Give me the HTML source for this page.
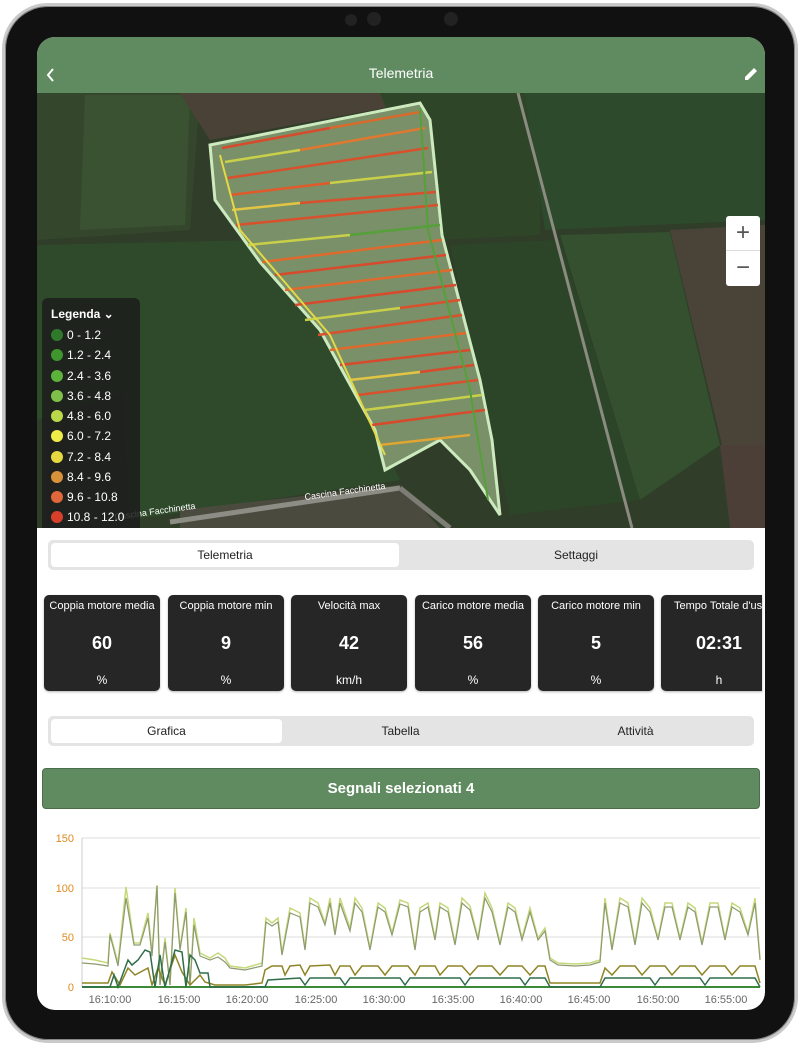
<!DOCTYPE html>
<html><head><meta charset="utf-8"><style>
*{margin:0;padding:0;box-sizing:border-box}
body{width:800px;height:1046px;background:#fff;position:relative;overflow:hidden;font-family:"Liberation Sans",sans-serif}
.ipad{position:absolute;left:2px;top:3px;width:796px;height:1040px;border-radius:46px;background:#111;border:3px solid #c9c9c9;box-shadow:0 0 0 1px #888 inset}
.screen{position:absolute;left:37px;top:37px;width:728px;height:973px;border-radius:18px;overflow:hidden;background:#fff}
.bar{position:absolute;left:0;top:0;width:728px;height:56px;background:#608b61;color:#fff}
.bar .t{position:absolute;left:0;right:0;top:28px;text-align:center;font-size:14px}
.map{position:absolute;left:0;top:56px;width:728px;height:435px;background:#2c3a27;overflow:hidden}
.legend{position:absolute;left:5px;top:205px;width:98px;height:235px;background:rgba(28,28,28,.85);border-radius:6px 6px 0 0;color:#fff;font-size:12px}
.legend .h{position:absolute;left:9px;top:9px;font-weight:bold;font-size:12px}
.legend .i{position:absolute;left:9px;height:14px;line-height:14px}
.legend .i b{display:inline-block;width:12px;height:12px;border-radius:50%;vertical-align:-2px;margin-right:4px}
.zoom{position:absolute;left:689px;top:123px;width:34px;height:70px;background:#fff;border-radius:3px;color:#555;font-size:24px;text-align:center;line-height:34px}
.seg{position:absolute;left:11px;width:706px;height:30px;background:#e4e4e4;border-radius:5px;font-size:12px;color:#222}
.seg div{position:absolute;top:3px;height:24px;line-height:24px;text-align:center}
.seg .on{background:#fff;border-radius:4px}
.card{position:absolute;top:558px;width:116px;height:96px;background:#262626;border-radius:5px;color:#fff;text-align:center;overflow:hidden;box-shadow:0 1px 2px rgba(0,0,0,.3)}
.card .a{position:absolute;top:5px;left:0;right:0;font-size:11px;white-space:nowrap}
.card .v{position:absolute;top:38px;left:0;right:0;font-size:18px;font-weight:bold}
.card .u{position:absolute;top:78px;left:0;right:0;font-size:12px}
.btn{position:absolute;left:5px;top:731px;width:718px;height:41px;background:#608b61;border:1px solid #4a6e4b;border-radius:4px;color:#fff;font-size:15px;font-weight:bold;text-align:center;line-height:40px}
</style></head><body>
<div class="ipad"></div>
<div style="position:absolute;left:345px;top:14px;width:12px;height:12px;border-radius:50%;background:#222"></div>
<div style="position:absolute;left:367px;top:12px;width:14px;height:14px;border-radius:50%;background:#222"></div>
<div style="position:absolute;left:444px;top:12px;width:14px;height:14px;border-radius:50%;background:#222"></div>
<div class="screen">
<div class="bar"><svg style="position:absolute;left:8px;top:30px" width="12" height="16"><path d="M8 2 L3 8 L8 14" stroke="#fff" stroke-width="2" fill="none"/></svg><div class="t">Telemetria</div>
<svg style="position:absolute;left:705px;top:28px" width="18" height="18"><path d="M3 15 L3 12 L12 3 L15 6 L6 15 Z" fill="#fff"/></svg></div>
<div class="map">
<svg width="728" height="435" viewBox="37 93 728 435">
<rect x="37" y="93" width="728" height="435" fill="#2f3d29"/>
<polygon points="37,93 200,93 190,230 37,240" fill="#34472c"/>
<polygon points="85,95 190,95 185,225 80,230" fill="#3a5231"/>
<polygon points="180,93 380,93 400,105 210,140" fill="#4a4236"/>
<polygon points="380,93 540,93 540,235 440,240" fill="#2e4528"/>
<polygon points="525,93 765,93 765,220 545,230" fill="#2d4a2c"/>
<polygon points="560,235 670,232 720,445 640,500" fill="#34502f"/>
<polygon points="670,230 765,225 765,445 722,445" fill="#4a4438"/>
<polygon points="450,245 560,240 640,500 510,515" fill="#2c4528"/>
<polygon points="37,245 260,240 340,330 37,420" fill="#2f4a2b"/>
<polygon points="120,330 330,330 400,480 130,520" fill="#2f4a2a"/>
<polygon points="720,445 765,445 765,528 730,528" fill="#4b3f37"/>
<polygon points="180,510 400,485 440,528 180,528" fill="#4a4a3e"/>
<line x1="518" y1="93" x2="632" y2="528" stroke="#8b8b80" stroke-width="3"/>
<line x1="170" y1="522" x2="400" y2="488" stroke="#8d8d86" stroke-width="5"/>
<line x1="400" y1="488" x2="450" y2="528" stroke="#7d7d76" stroke-width="5"/>
<polygon points="210,145 420,103 430,120 442,235 480,380 492,440 500,515 470,470 440,440 385,470 375,430 320,330 260,262 215,200" fill="#7a9068" stroke="#cdeabf" stroke-width="3"/>
<g stroke-width="2.5" fill="none">
<path d="M222 148 L330 128" stroke="#d84a2c"/><path d="M330 128 L420 112" stroke="#d86a2c"/>
<path d="M225 162 L300 150" stroke="#c8d04a"/><path d="M300 150 L425 128" stroke="#e0782f"/>
<path d="M228 178 L428 148" stroke="#d8502c"/><path d="M230 195 L330 183" stroke="#e05a2c"/><path d="M330 183 L432 172" stroke="#c8d04a"/>
<path d="M232 210 L300 203" stroke="#e3c545"/><path d="M300 203 L436 192" stroke="#d8502c"/><path d="M236 225 L438 205" stroke="#d8502c"/>
<path d="M248 245 L350 235" stroke="#c8d04a"/><path d="M350 235 L440 225" stroke="#56a03a"/><path d="M262 262 L442 240" stroke="#e06a2c"/><path d="M275 275 L446 255" stroke="#d84a2c"/><path d="M285 290 L452 270" stroke="#e06a2c"/><path d="M295 305 L456 285" stroke="#d84a2c"/><path d="M305 320 L400 308" stroke="#c8d04a"/><path d="M400 308 L460 300" stroke="#d8502c"/>
<path d="M318 335 L462 315" stroke="#d8502c"/><path d="M330 350 L466 333" stroke="#e06a2c"/><path d="M340 365 L470 350" stroke="#d84a2c"/><path d="M350 380 L420 372" stroke="#e3c545"/><path d="M420 372 L474 365" stroke="#d84a2c"/><path d="M358 395 L478 380" stroke="#d8502c"/><path d="M365 410 L482 395" stroke="#c8d04a"/><path d="M372 425 L485 410" stroke="#d84a2c"/><path d="M380 445 L470 435" stroke="#e0a533"/>
<path d="M220 155 L240 230 L330 335 L385 455" stroke="#e3d845" stroke-width="2"/>
<path d="M420 108 L428 230 L470 390 L488 500" stroke="#56a03a" stroke-width="2"/>
</g>
<text x="305" y="500" fill="#fff" font-size="9" transform="rotate(-8 305 500)" font-family="Liberation Sans">Cascina Facchinetta</text>
<text x="115" y="520" fill="#fff" font-size="9" transform="rotate(-8 115 520)" font-family="Liberation Sans">Cascina Facchinetta</text>
</svg>
<div class="legend"><div class="h">Legenda ⌄</div>
<div class="i" style="top:30px"><b style="background:#2f7a2a"></b>0 - 1.2</div>
<div class="i" style="top:50px"><b style="background:#3f962f"></b>1.2 - 2.4</div>
<div class="i" style="top:71px"><b style="background:#5bb33c"></b>2.4 - 3.6</div>
<div class="i" style="top:91px"><b style="background:#7ec04a"></b>3.6 - 4.8</div>
<div class="i" style="top:111px"><b style="background:#bad84a"></b>4.8 - 6.0</div>
<div class="i" style="top:131px"><b style="background:#efec4a"></b>6.0 - 7.2</div>
<div class="i" style="top:152px"><b style="background:#e6d83f"></b>7.2 - 8.4</div>
<div class="i" style="top:172px"><b style="background:#d9913a"></b>8.4 - 9.6</div>
<div class="i" style="top:192px"><b style="background:#e0673a"></b>9.6 - 10.8</div>
<div class="i" style="top:212px"><b style="background:#d8402c"></b>10.8 - 12.0</div>
</div>
<div class="zoom"><div>+</div><div style="border-top:1px solid #ddd">−</div></div>
</div>
<div class="seg" style="top:503px"><div class="on" style="left:3px;width:348px">Telemetria</div><div style="left:352px;width:352px">Settaggi</div></div>
<div class="card" style="left:7px"><div class="a">Coppia motore media</div><div class="v">60</div><div class="u">%</div></div>
<div class="card" style="left:131px"><div class="a">Coppia motore min</div><div class="v">9</div><div class="u">%</div></div>
<div class="card" style="left:254px"><div class="a">Velocità max</div><div class="v">42</div><div class="u">km/h</div></div>
<div class="card" style="left:378px"><div class="a">Carico motore media</div><div class="v">56</div><div class="u">%</div></div>
<div class="card" style="left:501px"><div class="a">Carico motore min</div><div class="v">5</div><div class="u">%</div></div>
<div class="card" style="left:624px;width:101px;border-radius:5px 0 0 5px"><div class="a" style="text-align:left;left:13px">Tempo Totale d'uso</div><div class="v" style="width:116px">02:31</div><div class="u" style="width:116px">h</div></div>
<div class="seg" style="top:679px"><div class="on" style="left:3px;width:231px">Grafica</div><div style="left:235px;width:235px">Tabella</div><div style="left:470px;width:235px">Attività</div></div>
<div class="btn">Segnali selezionati 4</div>
<svg style="position:absolute;left:-37px;top:-37px" width="800" height="1046">
<g font-family="Liberation Sans" font-size="11" fill="#e08a1e" text-anchor="end"><text x="74" y="842">150</text><text x="74" y="892">100</text><text x="74" y="941">50</text><text x="74" y="991">0</text></g>
<g stroke="#ddd" stroke-width="1"><line x1="82" y1="838" x2="760" y2="838"/><line x1="82" y1="888" x2="760" y2="888"/><line x1="82" y1="937" x2="760" y2="937"/></g>
<line x1="82" y1="838" x2="82" y2="987" stroke="#ccc"/>
<line x1="82" y1="987" x2="760" y2="987" stroke="#3a8a3a" stroke-width="2"/>
<g font-family="Liberation Sans" font-size="11" fill="#666" text-anchor="middle"><text x="110" y="1003">16:10:00</text><text x="179" y="1003">16:15:00</text><text x="247" y="1003">16:20:00</text><text x="316" y="1003">16:25:00</text><text x="384" y="1003">16:30:00</text><text x="453" y="1003">16:35:00</text><text x="521" y="1003">16:40:00</text><text x="589" y="1003">16:45:00</text><text x="658" y="1003">16:50:00</text><text x="726" y="1003">16:55:00</text></g>
<polyline fill="none" stroke="#c5d97a" stroke-width="1.5" points="82,958 95,960 108,963 110,933 118,963 126,887 134,943 140,943 148,913 152,953 157,885 160,985 165,938 170,985 175,888 180,948 186,908 190,985 194,918 200,953 210,958 218,953 225,958 230,966 245,968 262,963 266,918 272,923 278,918 282,953 290,908 300,913 305,948 310,898 318,903 325,923 330,898 335,933 340,898 350,928 355,898 362,908 370,948 378,903 385,908 392,933 400,900 408,903 415,948 420,908 428,903 435,938 440,903 448,908 455,943 462,898 470,906 478,938 485,893 492,908 500,943 508,903 515,908 522,938 530,908 538,938 545,928 550,958 558,963 575,964 590,963 600,960 605,898 612,948 620,898 628,903 635,943 642,898 650,908 658,938 665,903 672,903 680,938 688,903 695,908 702,943 710,903 718,903 725,938 732,903 740,908 748,933 755,898 760,958"/>
<polyline fill="none" stroke="#8e9a70" stroke-width="1.2" points="82,963 95,964 108,966 110,935 118,966 126,898 134,945 140,945 148,918 152,956 157,886 160,985 165,942 170,985 175,893 180,950 186,912 190,985 194,925 200,956 210,960 218,957 225,962 230,968 245,970 262,966 266,922 272,926 278,922 282,955 290,913 300,917 305,950 310,903 318,907 325,925 330,903 335,935 340,903 350,931 355,903 362,912 370,950 378,907 385,912 392,935 400,904 408,907 415,950 420,912 428,907 435,940 440,907 448,912 455,945 462,903 470,910 478,940 485,898 492,912 500,945 508,907 515,912 522,940 530,912 538,940 545,931 550,960 558,965 575,966 590,965 600,962 605,903 612,950 620,903 628,907 635,945 642,903 650,912 658,940 665,907 672,907 680,940 688,907 695,912 702,945 710,907 718,907 725,940 732,907 740,912 748,935 755,903 760,960"/>
<polyline fill="none" stroke="#8f8425" stroke-width="1.5" points="82,983 108,983 112,972 120,985 128,968 135,975 148,968 152,985 158,968 165,985 175,955 182,972 190,985 200,975 205,982 215,985 245,985 262,983 265,970 272,966 282,966 285,975 290,966 300,965 305,975 310,966 330,965 335,975 340,966 350,966 355,975 362,966 378,966 385,975 392,966 408,966 415,975 420,966 435,966 440,975 448,966 462,966 470,975 478,966 492,966 500,975 508,966 522,966 530,975 538,966 545,966 550,983 600,983 605,968 612,975 620,966 635,966 642,975 650,966 665,966 672,975 680,966 695,966 702,975 710,966 725,966 732,975 740,966 755,966 760,983"/>
<polyline fill="none" stroke="#2f6e4a" stroke-width="1.5" points="82,987 110,987 114,975 118,987 128,960 132,965 138,960 145,950 150,952 155,987 160,955 165,987 175,950 182,952 186,987 190,955 195,960 200,973 208,973 210,987 265,987 268,980 300,978 305,985 310,978 340,978 345,985 350,978 400,978 405,985 410,978 460,978 465,985 470,978 520,978 525,985 530,978 545,978 550,987 600,987 605,978 650,978 655,985 660,978 700,978 705,985 710,978 755,978 760,987"/>
</svg>
</div>
</body></html>
